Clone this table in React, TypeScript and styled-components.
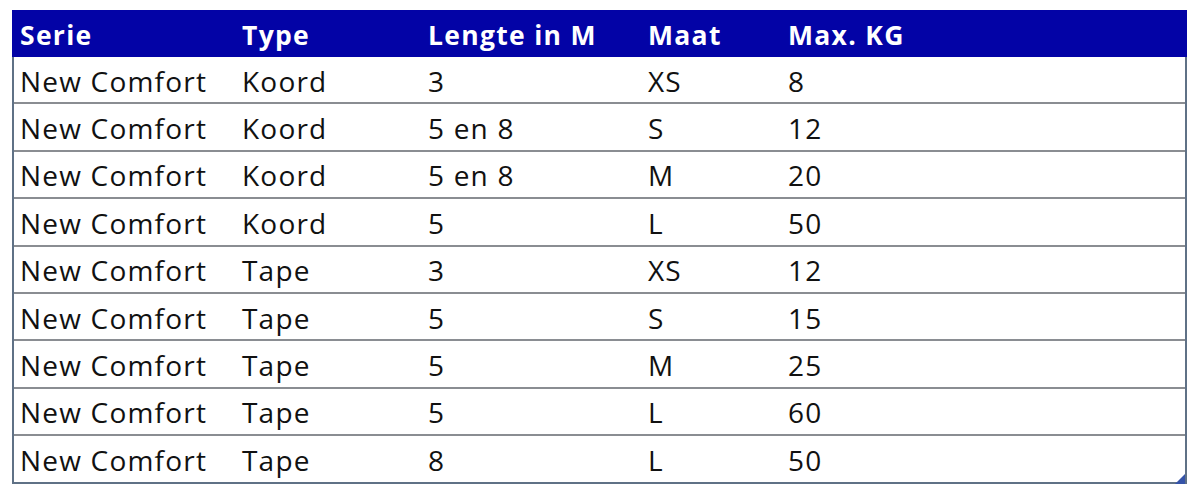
import React from 'react';
import { styled, createGlobalStyle } from 'styled-components';

const GlobalStyle = createGlobalStyle`
  html, body {
    margin: 0;
    padding: 0;
    background: #ffffff;
  }
  body {
    font-family: "Open Sans", "Liberation Sans", sans-serif;
    overflow: hidden;
  }
`;

const columns = ['Serie', 'Type', 'Lengte in M', 'Maat', 'Max. KG'];

const rows: string[][] = [
  ['New Comfort', 'Koord', '3', 'XS', '8'],
  ['New Comfort', 'Koord', '5 en 8', 'S', '12'],
  ['New Comfort', 'Koord', '5 en 8', 'M', '20'],
  ['New Comfort', 'Koord', '5', 'L', '50'],
  ['New Comfort', 'Tape', '3', 'XS', '12'],
  ['New Comfort', 'Tape', '5', 'S', '15'],
  ['New Comfort', 'Tape', '5', 'M', '25'],
  ['New Comfort', 'Tape', '5', 'L', '60'],
  ['New Comfort', 'Tape', '8', 'L', '50'],
];

const App = () => {
  return (
    <Page>
      <GlobalStyle />
      <Table>
        <HeaderRow>
          {columns.map((c) => (
            <HeadCell key={c}>{c}</HeadCell>
          ))}
        </HeaderRow>
        {rows.map((r, i) => (
          <Row key={i} $last={i === rows.length - 1}>
            {r.map((v, j) => (
              <Cell key={j}>{v}</Cell>
            ))}
          </Row>
        ))}
        <Handle />
      </Table>
    </Page>
  );
};

const Page = styled.div`
  padding: 10px 0 0 12px;
  width: 1200px;
  height: 484px;
  box-sizing: border-box;
`;
const Table = styled.div`
  position: relative;
  width: 1175px;
  border-left: 2px solid #5f7186;
  border-right: 2px solid #5f7186;
  box-sizing: border-box;
`;
const gridCols = `222px 186px 220px 140px 1fr`;
const HeaderRow = styled.div`
  display: grid;
  grid-template-columns: ${gridCols};
  height: 47px;
  align-items: center;
  background: #0303a6;
  margin: 0 -2px;
  padding: 0 2px;
`;
const HeadCell = styled.div`
  padding-left: 6px;
  font-weight: 700;
  font-size: 26.5px;
  color: #ffffff;
  letter-spacing: 1.3px;
  padding-top: 2px;
  white-space: nowrap;
`;
const Row = styled.div<{ $last?: boolean }>`
  display: grid;
  grid-template-columns: ${gridCols};
  height: 47.4px;
  align-items: center;
  box-sizing: border-box;
  border-bottom: 2px solid ${(p) => (p.$last ? '#5f7186' : '#8a8d92')};
`;
const Cell = styled.div`
  padding-left: 6px;
  font-size: 28px;
  color: #111111;
  letter-spacing: 1.2px;
  padding-top: 2px;
  white-space: nowrap;
  &:first-child {
    padding-left: 6px;
  }
`;
const Handle = styled.div`
  position: absolute;
  right: 0;
  bottom: 0;
  width: 0;
  height: 0;
  border-left: 10px solid transparent;
  border-bottom: 10px solid #3553a8;
`;

export default App;
